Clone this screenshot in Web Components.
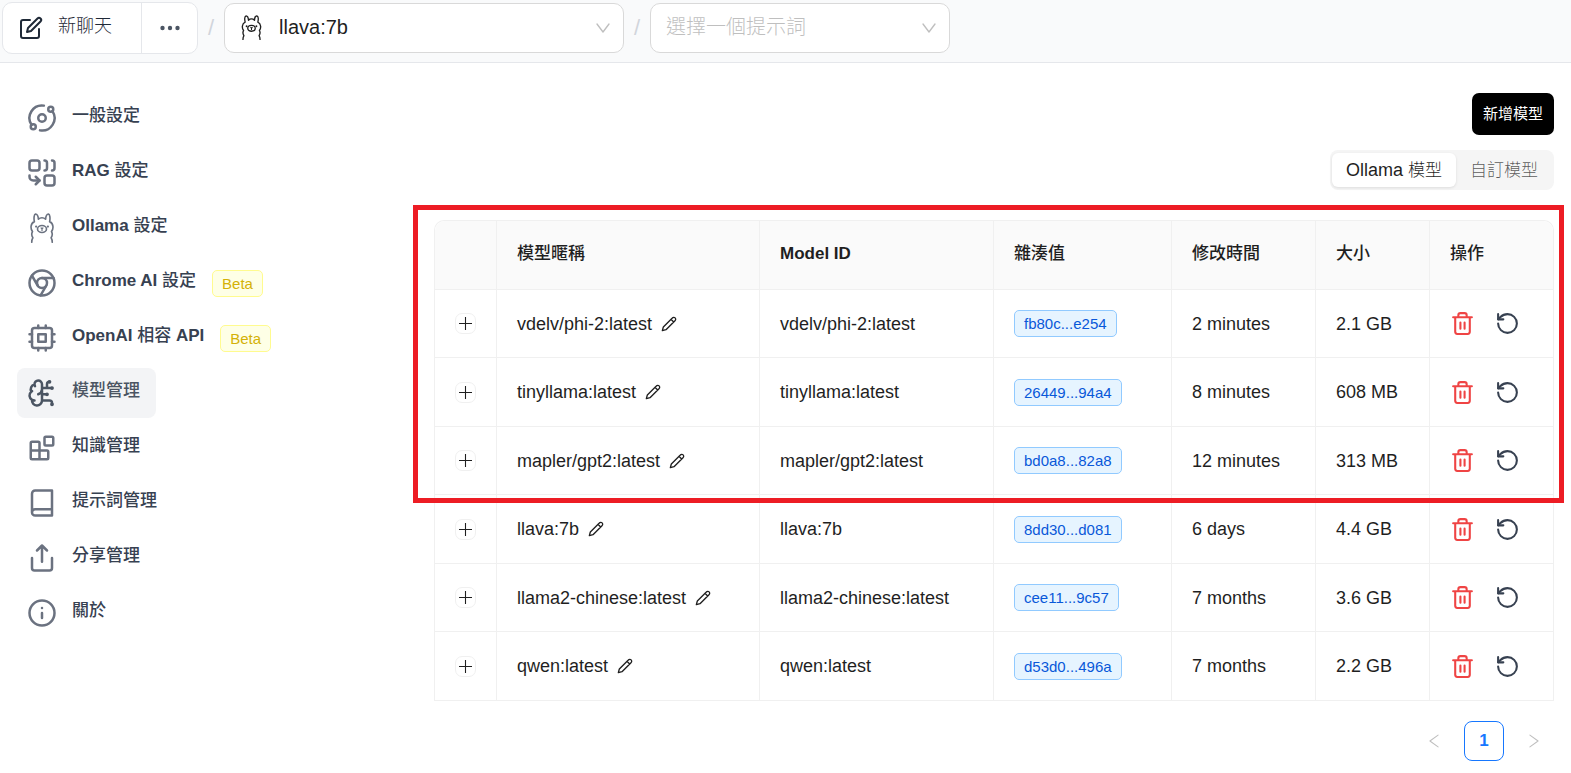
<!DOCTYPE html>
<html lang="zh-Hant">
<head>
<meta charset="utf-8">
<title>模型管理</title>
<style>
html, body { margin: 0; }
body {
  font-family: "Liberation Sans", "Noto Sans CJK TC", sans-serif;
  font-size: 17px; line-height: 24px; color: #1f1f1f; background: #fff;
}
</style>
</head>
<body>
<app-shell></app-shell>
<script>
const ICONS = {
  edit: '<path d="M11 4H4a2 2 0 0 0-2 2v14a2 2 0 0 0 2 2h14a2 2 0 0 0 2-2v-7"/><path d="M18.500 2.500a2.121 2.121 0 0 1 3 3L12 15l-4 1 1-4 9.500-9.500z"/>',
  dots: '<g fill="currentColor" stroke="none"><circle cx="4.500" cy="12" r="2.200"/><circle cx="12" cy="12" r="2.200"/><circle cx="19.500" cy="12" r="2.200"/></g>',
  orbit: '<circle cx="12" cy="12" r="3"/><circle cx="19" cy="5" r="2"/><circle cx="5" cy="19" r="2"/><path d="M10.400 21.900a10 10 0 0 0 9.941-15.416M13.500 2.100a10 10 0 0 0-9.841 15.416"/>',
  combine: '<rect width="8" height="8" x="2" y="2" rx="2"/><path d="M14 2c1.100 0 2 .9 2 2v4c0 1.100-.9 2-2 2M20 2c1.100 0 2 .9 2 2v4c0 1.100-.9 2-2 2M10 18H5c-1.700 0-3-1.300-3-3v-1"/><path d="M7 21l3-3-3-3"/><rect width="8" height="8" x="14" y="14" rx="2"/>',
  llama: '<g stroke-width="1.300"><path d="M3.800 23.400c0-1.600.3-2.600.9-3.600-1-1.500-1.200-3.300-.3-4.900C2.600 12.600 2.700 8.200 5.900 6.900 5.300 4.200 5.700 1.200 6.800.8c1.300.1 2.200 2 2.300 4.200 1.600-1.600 4.200-1.600 5.800 0 .1-2.200 1-4.100 2.300-4.200 1.100.4 1.500 3.400.9 6.100 3.200 1.300 3.300 5.700 1.500 8 .9 1.600.7 3.400-.3 4.900.6 1 .9 2 .9 3.600"/><ellipse cx="12" cy="12.800" rx="3.600" ry="2.800"/><path stroke-width="1" d="M11.300 12l.7.600.7-.6M12 12.600v1.300"/></g><g fill="currentColor" stroke="none"><circle cx="7.300" cy="10.800" r=".9"/><circle cx="16.700" cy="10.800" r=".9"/></g>',
  chrome: '<circle cx="12" cy="12" r="10"/><circle cx="12" cy="12" r="4"/><path d="M21.170 8H12M3.950 6.060 8.540 14M10.880 21.940 15.460 14"/>',
  cpu: '<rect width="16" height="16" x="4" y="4" rx="2"/><rect width="6" height="6" x="9" y="9"/><path d="M15 2v2M15 20v2M2 15h2M2 9h2M20 15h2M20 9h2M9 2v2M9 20v2"/>',
  brain: '<path d="M12 5a3 3 0 1 0-5.997.125 4 4 0 0 0-2.526 5.770 4 4 0 0 0 .556 6.588A4 4 0 1 0 12 18ZM9 13a4.500 4.500 0 0 0 3-4M6.003 5.125A3 3 0 0 0 6.401 6.500M3.477 10.896a4 4 0 0 1 .585-.396M6 18a4 4 0 0 1-1.967-.516M12 13h4M12 18h6a2 2 0 0 1 2 2v1M12 8h8M16 8V5a2 2 0 0 1 2-2"/><circle cx="16" cy="13" r=".5"/><circle cx="18" cy="3" r=".5"/><circle cx="20" cy="21" r=".5"/><circle cx="20" cy="8" r=".5"/>',
  blocks: '<rect width="7" height="7" x="14" y="3" rx="1"/><path d="M10 21V8a1 1 0 0 0-1-1H4a1 1 0 0 0-1 1v12a1 1 0 0 0 1 1h12a1 1 0 0 0 1-1v-5a1 1 0 0 0-1-1H3"/>',
  book: '<path d="M4 19.500v-15A2.500 2.500 0 0 1 6.500 2H20v20H6.500a2.500 2.500 0 0 1 0-5H20"/>',
  share: '<path d="M4 12v8a2 2 0 0 0 2 2h12a2 2 0 0 0 2-2v-8M16 6l-4-4-4 4M12 2v13"/>',
  info: '<circle cx="12" cy="12" r="10"/><path d="M12 16v-4M12 8h.01"/>',
  pencil: '<path d="M17 3a2.850 2.830 0 1 1 4 4L7.500 20.500 2 22l1.500-5.500ZM15 5l4 4"/>',
  trash: '<path d="M3 6h18M19 6v14c0 1-1 2-2 2H7c-1 0-2-1-2-2V6M8 6V4c0-1 1-2 2-2h4c1 0 2 1 2 2v2M10 11v6M14 11v6"/>',
  rotate: '<path d="M3 12a9 9 0 1 0 9-9 9.750 9.750 0 0 0-6.740 2.740L3 8"/><path d="M3 3v5h5"/>',
  down: '<path d="M3 6l9 12 9-12"/>',
  left: '<path stroke-width="1.800" d="M19 2 5 12l14 10"/>',
  right: '<path stroke-width="1.800" d="M5 2l14 10L5 22"/>',
  plus: '<path stroke-linecap="butt" d="M12 0v24M0 12h24"/>'
};

/* Wraps runs of Han characters so they can carry their own weight and size. */
const han = text => text.replace(/[\u3400-\u9fff]+/g, run => `<span class="han">${run}</span>`);

function define(name, render) {
  customElements.define(name, class extends HTMLElement {
    connectedCallback() {
      if (this.shadowRoot) return;
      this.attachShadow({ mode: 'open' }).innerHTML =
        `<style>*{box-sizing:border-box}button,select{font:inherit;color:inherit;margin:0}button{padding:0;border:0;background:none;cursor:pointer}.han{font-weight:var(--han,400)}</style>` + render(this);
    }
  });
}

define('ui-icon', el => `
  <style>:host{display:block;flex:none;width:var(--size,30px);height:var(--size,30px)}svg{display:block;width:100%;height:100%}</style>
  <svg viewBox="0 0 24 24" fill="none" stroke="currentColor" stroke-width="2" stroke-linecap="round" stroke-linejoin="round" aria-hidden="true">${ICONS[el.getAttribute('name')]}</svg>`);

define('chat-actions', () => `
  <style>
    :host{display:flex;height:52px;border:1px solid #e5e7eb;border-radius:10px;background:#fff;--han:300}
    button{display:flex;align-items:center;color:#1f2937}
    .new{gap:15px;padding:0 29px 0 16px}
    .new ui-icon{--size:24px}
    .more{width:56px;justify-content:center;border-left:1px solid #e5e7eb;color:#4b5563}
    .more ui-icon{--size:24px}
    .label{font-size:18px;padding-bottom:4px}
  </style>
  <button class="new"><ui-icon name="edit"></ui-icon><span class="label">${han('新聊天')}</span></button>
  <button class="more" aria-label="更多"><ui-icon name="dots"></ui-icon></button>`);

define('select-box', el => `
  <style>
    :host{display:grid;align-items:center;height:50px;border:1px solid #d9d9d9;border-radius:10px;background:#fff}
    :host > *{grid-area:1/1}
    select,ui-icon{grid-area:1/1}
    select{appearance:none;border:0;background:none;width:100%;height:100%;font-size:20px;padding:0 44px 2px 15px;outline:0;border-radius:10px}
    :host([placeholder]) select{color:#bfbfbf;font-weight:300}
    :host([icon]) select{padding-left:54px}
    .lead{--size:25px;margin-left:14px}
    .arrow{--size:16px;justify-self:end;margin-right:12px;color:#bfbfbf;pointer-events:none}
  </style>
  <select aria-label="${el.getAttribute('label')}"><option>${el.getAttribute('value')}</option></select>
  ${el.hasAttribute('icon') ? `<ui-icon class="lead" name="${el.getAttribute('icon')}"></ui-icon>` : ''}
  <ui-icon class="arrow" name="down"></ui-icon>`);

define('top-bar', () => `
  <style>
    :host{display:flex;align-items:center;height:63px;padding:0 2px 7px;border-bottom:1px solid #e5e7eb;background:#f9fafb;box-sizing:border-box}
    .slash{width:26px;text-align:center;font-size:22px;color:#d1d5db}
    .model{flex:0 1 400px}.prompt{flex:0 1 300px}
  </style>
  <chat-actions></chat-actions>
  <span class="slash">/</span>
  <select-box class="model" icon="llama" label="模型" value="llava:7b"></select-box>
  <span class="slash">/</span>
  <select-box class="prompt" placeholder label="提示詞" value="選擇一個提示詞"></select-box>`);

define('nav-item', el => `
  <style>
    :host{display:flex;align-items:center;height:50px}
    a{display:flex;align-items:center;gap:15px;height:50px;padding:0 16px 0 10px;border-radius:8px;text-decoration:none;color:#374151;font-weight:700;--han:500}
    ui-icon{color:#6b7280}
    .label{padding-bottom:5px}
    :host([active]) a{background:#f3f4f6;color:#4b5563}
    :host([active]) ui-icon{color:#4b5563}
  </style>
  <a href="#"><ui-icon name="${el.getAttribute('icon')}"></ui-icon><span class="label">${han(el.getAttribute('label'))}</span></a><slot></slot>`);

define('ui-tag', () => `
  <style>
    :host{display:inline-block;height:27px;line-height:26px;padding:0 9px;border:1px solid #91caff;border-radius:5px;background:#e6f4ff;color:#0958d9;font-size:15px;box-sizing:border-box}
    :host([tone=yellow]){background:#feffe6;border-color:#fffb8f;color:#d4b106}
  </style><slot></slot>`);

define('side-nav', () => `
  <style>
    :host{display:block}
    nav{display:flex;flex-direction:column;gap:5px}
  </style>
  <nav aria-label="設定">
    <nav-item icon="orbit" label="一般設定"></nav-item>
    <nav-item icon="combine" label="RAG 設定"></nav-item>
    <nav-item icon="llama" label="Ollama 設定"></nav-item>
    <nav-item icon="chrome" label="Chrome AI 設定"><ui-tag tone="yellow">Beta</ui-tag></nav-item>
    <nav-item icon="cpu" label="OpenAI 相容 API"><ui-tag tone="yellow">Beta</ui-tag></nav-item>
    <nav-item icon="brain" label="模型管理" active></nav-item>
    <nav-item icon="blocks" label="知識管理"></nav-item>
    <nav-item icon="book" label="提示詞管理"></nav-item>
    <nav-item icon="share" label="分享管理"></nav-item>
    <nav-item icon="info" label="關於"></nav-item>
  </nav>`);

define('segment-switch', () => `
  <style>
    :host{display:flex;height:40px;padding:3px 2px;border-radius:8px;background:#f5f5f5;box-sizing:border-box}
    button{padding:0 14px;border-radius:6px;font-size:18px;color:rgba(0,0,0,.65);--han:300}
    .han{font-size:17px}
    [aria-pressed=true]{background:#fff;color:#1f1f1f;box-shadow:0 1px 3px rgba(0,0,0,.1)}
  </style>
  <button aria-pressed="true">Ollama ${han('模型')}</button><button aria-pressed="false">${han('自訂模型')}</button>`);

const MODELS = [
  ['vdelv/phi-2:latest', 'fb80c...e254', '2 minutes', '2.1 GB'],
  ['tinyllama:latest', '26449...94a4', '8 minutes', '608 MB'],
  ['mapler/gpt2:latest', 'bd0a8...82a8', '12 minutes', '313 MB'],
  ['llava:7b', '8dd30...d081', '6 days', '4.4 GB'],
  ['llama2-chinese:latest', 'cee11...9c57', '7 months', '3.6 GB'],
  ['qwen:latest', 'd53d0...496a', '7 months', '2.2 GB']
];

define('model-table', () => `
  <style>
    :host{display:block;position:relative}
    table{width:100%;table-layout:fixed;border-collapse:separate;border-spacing:0;border:1px solid #f0f0f0;border-bottom:0;border-radius:10px 10px 0 0}
    th,td{padding:0 20px;text-align:left;border-right:1px solid #f0f0f0;border-bottom:1px solid #f0f0f0}
    th:last-child,td:last-child{border-right:0}
    th{height:69px;background:#fafafa;font-weight:700;padding-bottom:2px;--han:500}
    th:first-child{border-top-left-radius:10px}th:last-child{border-top-right-radius:10px}
    td{height:68px;font-size:18px}
    tr:nth-child(even) td{height:69px}
    td:first-child{padding:0}
    .expand{display:flex;align-items:center;justify-content:center;width:21px;height:21px;margin:auto;border:1px solid #f0f0f0;border-radius:7px}
    .expand ui-icon{--size:13px}
    .name,.acts{display:flex;align-items:center}
    .name{gap:9px}
    .name ui-icon{--size:16px}
    .acts{gap:20px}
    .acts ui-icon{--size:25px}
    .del{color:#ef4444}.pull{color:#374151}
    .mark{position:absolute;inset:-15px -10px auto -21px;height:298px;border:5px solid #ed1c24;box-sizing:border-box;pointer-events:none}
  </style>
  <table>
    <colgroup><col style="width:62px"><col style="width:263px"><col style="width:234px"><col style="width:178px"><col style="width:144px"><col style="width:114px"><col style="width:123px"></colgroup>
    <thead><tr><th></th>${['模型暱稱', 'Model ID', '雜湊值', '修改時間', '大小', '操作'].map(t => `<th scope="col">${han(t)}</th>`).join('')}</tr></thead>
    <tbody>${MODELS.map(([name, hash, time, size]) => `
      <tr>
        <td><button class="expand" aria-label="展開"><ui-icon name="plus"></ui-icon></button></td>
        <td><div class="name"><span>${name}</span><button aria-label="編輯"><ui-icon name="pencil"></ui-icon></button></div></td>
        <td>${name}</td><td><ui-tag>${hash}</ui-tag></td><td>${time}</td><td>${size}</td>
        <td><div class="acts"><button class="del" aria-label="刪除"><ui-icon name="trash"></ui-icon></button><button class="pull" aria-label="重新下載"><ui-icon name="rotate"></ui-icon></button></div></td>
      </tr>`).join('')}</tbody>
  </table>
  <div class="mark"></div>`);

define('page-nav', () => `
  <style>
    :host{display:flex;justify-content:flex-end;gap:10px}
    button{display:flex;align-items:center;justify-content:center;width:40px;height:40px;border-radius:8px;color:#bfbfbf}
    ui-icon{--size:14px}
    .now{border:1px solid #1677ff;color:#1677ff;font-weight:700;background:#fff}
  </style>
  <button aria-label="上一頁"><ui-icon name="left"></ui-icon></button>
  <button class="now" aria-current="page">1</button>
  <button aria-label="下一頁"><ui-icon name="right"></ui-icon></button>`);

define('model-page', () => `
  <style>
    :host{display:flex;flex-direction:column;align-items:flex-end}
    .add{height:42px;padding:0 11px;border-radius:7px;background:#000;color:#fff;font-size:15px;--han:400}
    segment-switch{margin:15px 0 30px}
    model-table{align-self:stretch}
    page-nav{margin-top:20px}
  </style>
  <button class="add">${han('新增模型')}</button>
  <segment-switch></segment-switch>
  <model-table></model-table>
  <page-nav></page-nav>`);

define('app-shell', () => `
  <style>
    :host{display:block}
    .body{display:flex}
    side-nav{flex:0 0 417px;padding:30px 0 0 17px;box-sizing:border-box}
    model-page{flex:1;min-width:0;padding:30px 17px 10px}
  </style>
  <top-bar></top-bar>
  <div class="body"><side-nav></side-nav><model-page></model-page></div>`);
</script>
</body>
</html>
